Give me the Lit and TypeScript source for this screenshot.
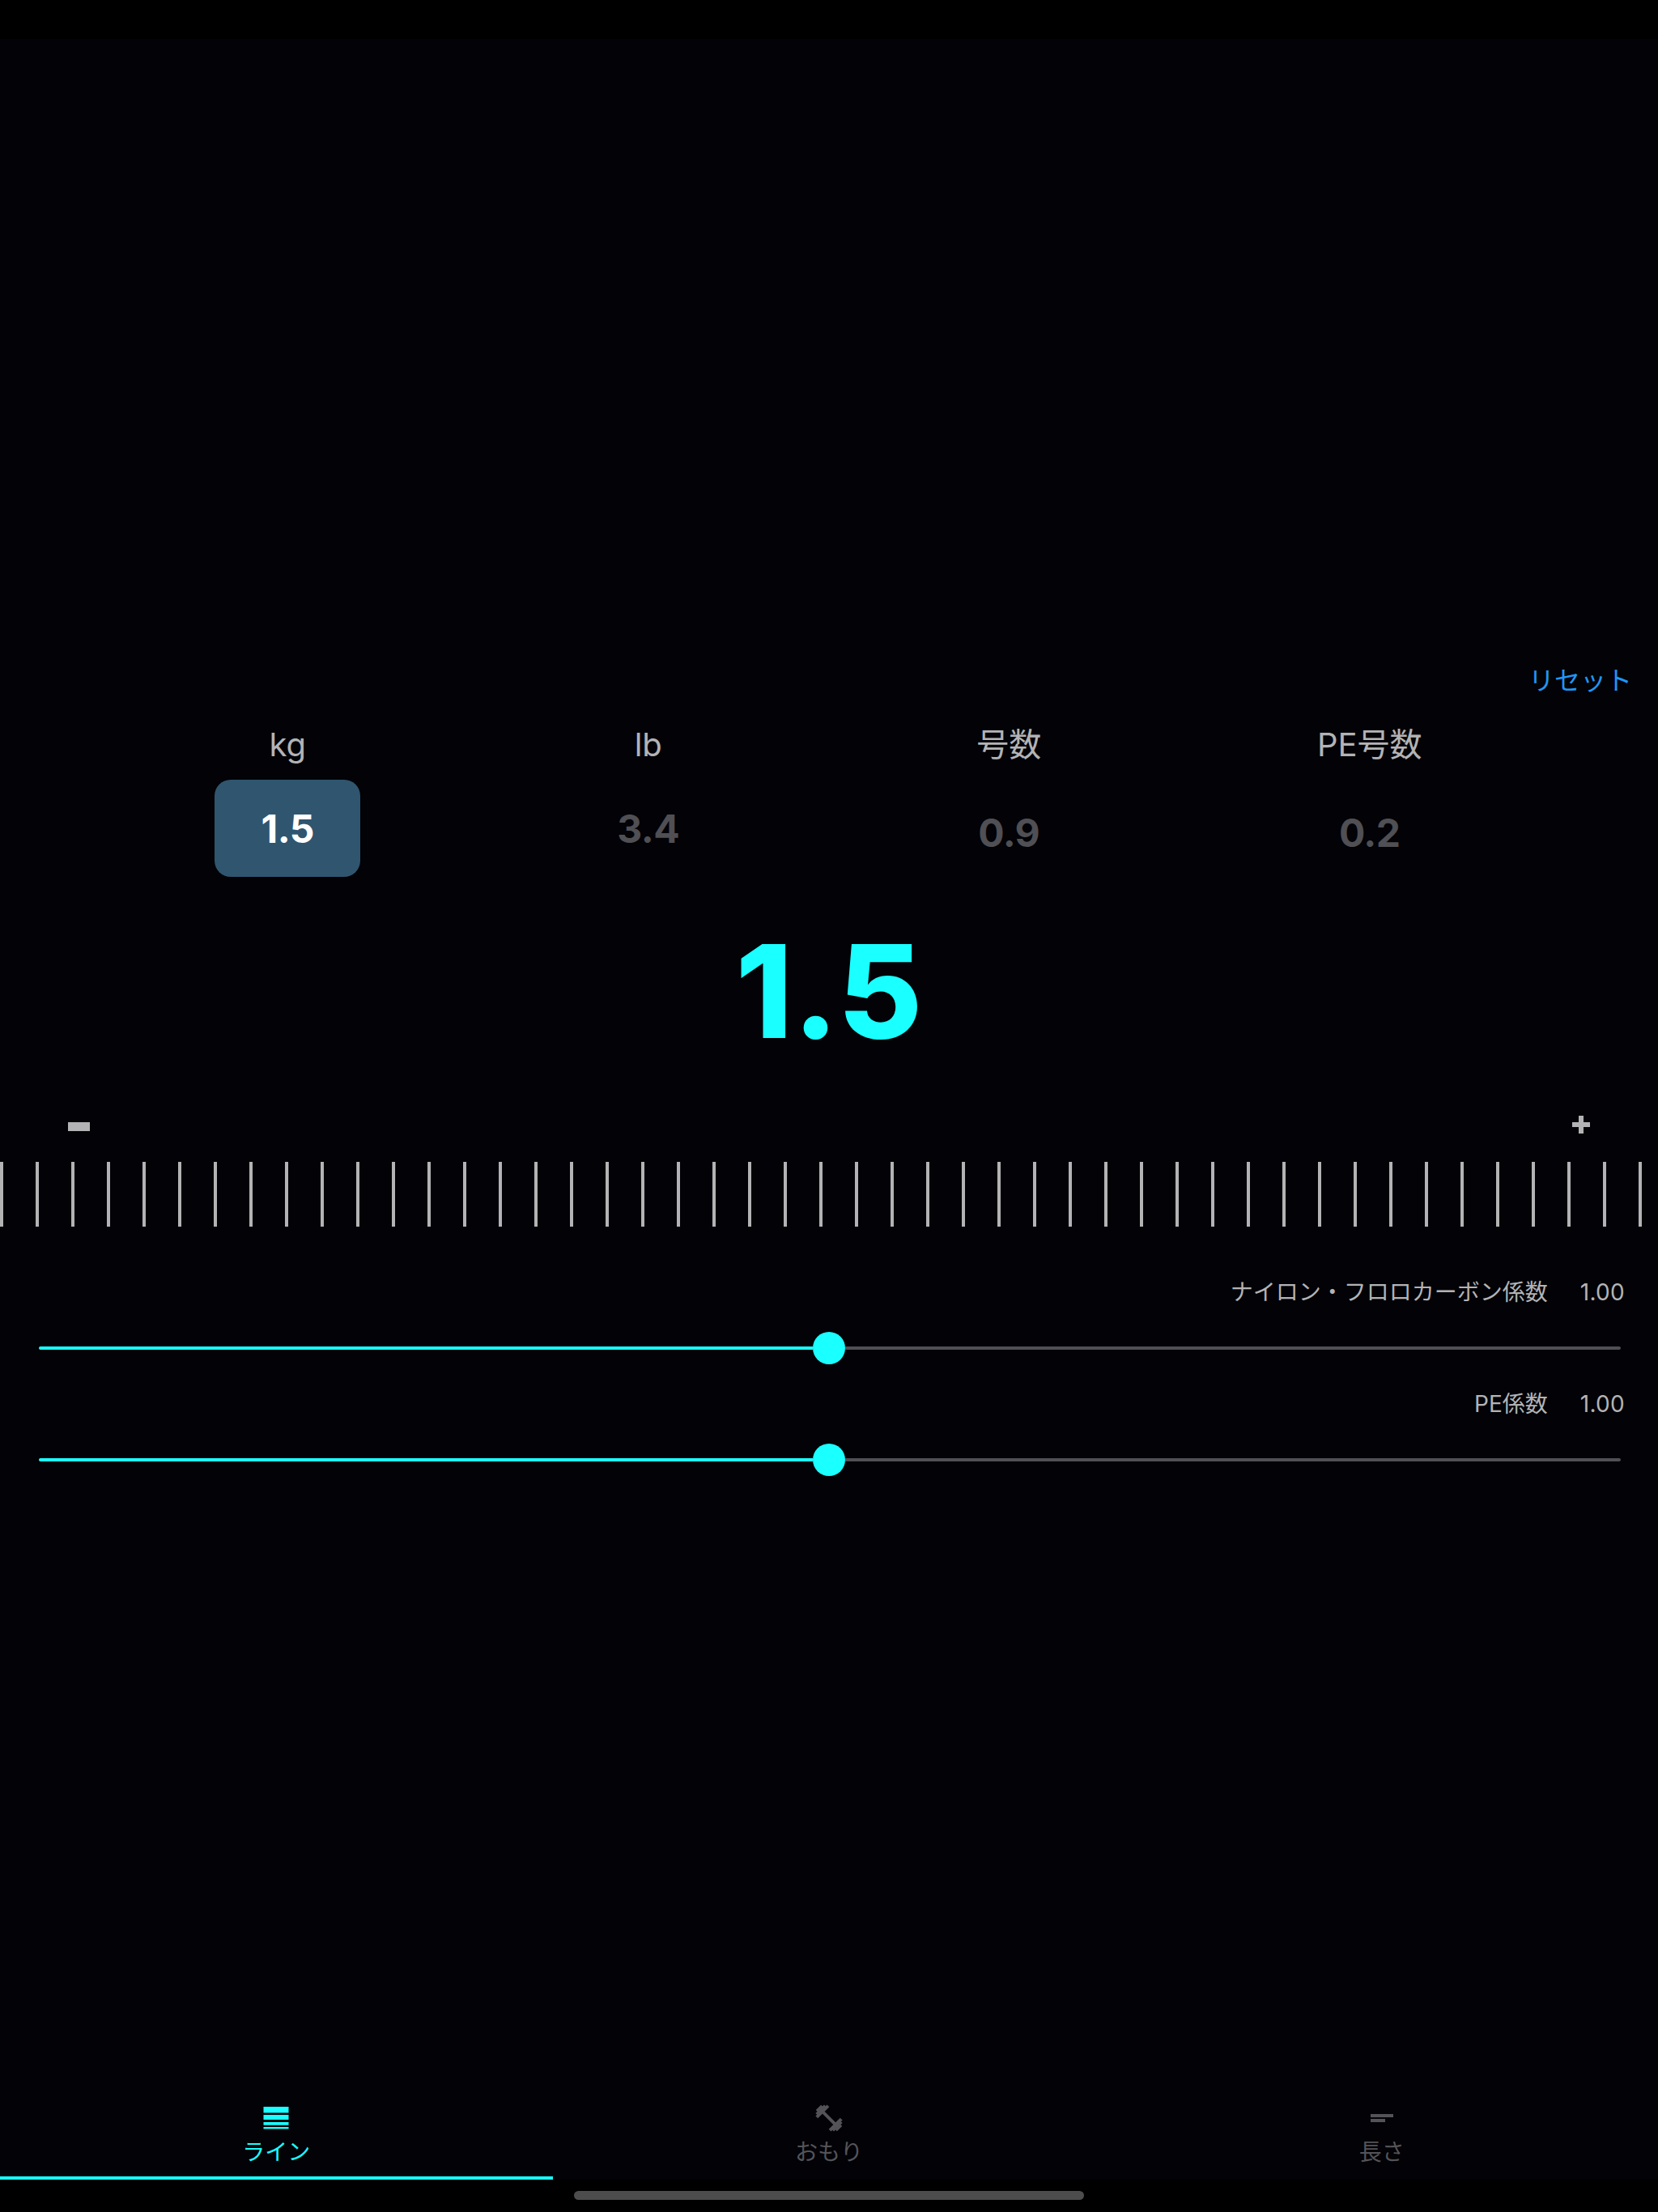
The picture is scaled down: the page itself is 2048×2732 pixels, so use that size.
import { LitElement, html, css } from "lit";
import { customElement } from "lit/decorators.js";

const UNITS = [
  { label: "kg", value: "1.5", active: true, low: false },
  { label: "lb", value: "3.4", active: false, low: false },
  { label: "号数", value: "0.9", active: false, low: true },
  { label: "PE号数", value: "0.2", active: false, low: true },
];

const SLIDERS = [
  { label: "ナイロン・フロロカーボン係数", value: "1.00" },
  { label: "PE係数", value: "1.00" },
];

@customElement("app-root")
export class AppRoot extends LitElement {
  static styles = css`
    :host {
      display: flex;
      flex-direction: column;
      width: 2048px;
      height: 2732px;
      background: #020207;
      color: #b3b3b5;
      font-family: Inter, "Noto Sans CJK JP", sans-serif;
      overflow: hidden;
    }
    .status {
      flex: none;
      height: 48px;
      background: #000;
    }
    .main {
      flex: 1;
      padding-top: 772px;
    }
    .reset-row {
      display: flex;
      justify-content: flex-end;
      padding: 1px 32px 0 0;
      height: 39px;
      line-height: 40px;
      font-size: 32px;
      font-weight: 400;
      color: #2196f3;
    }
    .units {
      display: grid;
      grid-template-columns: repeat(4, 1fr);
      padding: 36px 133.500px 0 132.500px;
    }
    .unit {
      display: flex;
      flex-direction: column;
      align-items: center;
    }
    .unit-label {
      height: 48px;
      line-height: 48px;
      font-size: 40px;
      font-weight: 400;
    }
    .unit-value {
      display: flex;
      align-items: center;
      justify-content: center;
      box-sizing: border-box;
      width: 180px;
      height: 120px;
      margin-top: 19px;
      border-radius: 20px;
      font-size: 48px;
      font-weight: 700;
      letter-spacing: -0.5px;
      color: #4f4f54;
    }
    .unit-value.low {
      padding-top: 10px;
    }
    .unit-value.active {
      background: #30556f;
      color: #fff;
    }
    .big {
      margin-top: 51px;
      height: 181px;
      line-height: 180px;
      text-align: center;
      font-size: 160px;
      font-weight: 800;
      color: #1affff;
    }
    .steps {
      display: flex;
      align-items: center;
      justify-content: space-between;
      height: 24px;
      margin-top: 64px;
      padding: 0 84px;
    }
    .minus {
      width: 27px;
      height: 11px;
      background: #b3b3b5;
    }
    .plus {
      width: 22px;
      height: 22px;
      margin-bottom: 5px;
      fill: #b3b3b5;
    }
    .ticks {
      display: flex;
      gap: 40px;
      margin-top: 32px;
      height: 80px;
    }
    .tick {
      flex: none;
      width: 4px;
      height: 80px;
      background: #b3b3b5;
    }
    .sliders {
      margin-top: 62px;
    }
    .slider {
      height: 138px;
    }
    .slider-head {
      display: flex;
      justify-content: flex-end;
      gap: 40px;
      margin-top: -1px;
      padding-right: 41px;
      height: 40px;
      line-height: 40px;
      font-size: 28px;
      font-weight: 400;
    }
    .slider-head .num {
      letter-spacing: 0.3px;
    }
    .slider + .slider .slider-head {
      margin-top: 0;
    }
    .track {
      display: flex;
      align-items: center;
      height: 40px;
      margin: 29px 46px 0 48px;
    }
    .fill {
      flex: none;
      width: 956px;
      height: 4px;
      border-radius: 2px 0 0 2px;
      background: #1affff;
    }
    .rest {
      flex: 1;
      height: 4px;
      border-radius: 0 2px 2px 0;
      background: #4f4f55;
    }
    .thumb {
      flex: none;
      width: 40px;
      height: 40px;
      border-radius: 50%;
      background: #1affff;
    }
    .tabs {
      display: grid;
      grid-template-columns: repeat(3, 1fr);
      height: 112px;
    }
    .tab {
      display: flex;
      flex-direction: column;
      align-items: center;
      box-sizing: border-box;
      padding-top: 16px;
      border-bottom: 4px solid transparent;
      color: #545458;
    }
    .tab.active {
      border-bottom-color: #1affff;
      color: #1affff;
    }
    .tab-icon {
      display: block;
      width: 40px;
      height: 40px;
      fill: currentColor;
    }
    .tab-label {
      height: 40px;
      line-height: 40px;
      margin-top: 2px;
      font-size: 28px;
      font-weight: 400;
    }
    .home {
      display: flex;
      justify-content: center;
      height: 40px;
      padding-top: 14px;
      box-sizing: border-box;
      background: #000;
    }
    .home-bar {
      width: 630px;
      height: 11px;
      border-radius: 6px;
      background: #4d4d4d;
    }
  `;

  render() {
    return html`
      <div class="status"></div>
      <div class="main">
        <div class="reset-row"><span>リセット</span></div>
        <div class="units">
          ${UNITS.map(
            (u) => html`
              <div class="unit">
                <div class="unit-label">${u.label}</div>
                <div class="unit-value ${u.active ? "active" : ""} ${u.low ? "low" : ""}">${u.value}</div>
              </div>
            `
          )}
        </div>
        <div class="big">1.5</div>
        <div class="steps">
          <div class="minus"></div>
          <svg class="plus" viewBox="0 0 22 22"><path d="M8 0h6v8h8v6h-8v8H8v-8H0V8h8z" /></svg>
        </div>
        <div class="ticks">
          ${Array.from({ length: 47 }, () => html`<div class="tick"></div>`)}
        </div>
        <div class="sliders">
          ${SLIDERS.map(
            (s) => html`
              <div class="slider">
                <div class="slider-head"><span>${s.label}</span><span class="num">${s.value}</span></div>
                <div class="track"><div class="fill"></div><div class="thumb"></div><div class="rest"></div></div>
              </div>
            `
          )}
        </div>
      </div>
      <div class="tabs">
        <div class="tab active">
          <svg class="tab-icon" viewBox="0 0 40 40">
            <rect x="4.500" y="6" width="31" height="7.500" />
            <rect x="4.500" y="16" width="31" height="6" />
            <rect x="4.500" y="25" width="31" height="3.700" />
            <rect x="4.500" y="31" width="31" height="2.400" />
          </svg>
          <div class="tab-label">ライン</div>
        </div>
        <div class="tab">
          <svg class="tab-icon" viewBox="0 0 40 40">
            <g transform="rotate(45 20 20)">
              <rect x="6" y="18" width="28" height="4" />
              <rect x="1.500" y="15.500" width="3" height="9" />
              <rect x="4" y="12.500" width="3" height="15" />
              <rect x="6.500" y="10" width="4" height="20" />
              <rect x="29.500" y="10" width="4" height="20" />
              <rect x="33" y="12.500" width="3" height="15" />
              <rect x="35.500" y="15.500" width="3" height="9" />
            </g>
          </svg>
          <div class="tab-label">おもり</div>
        </div>
        <div class="tab">
          <svg class="tab-icon" viewBox="0 0 40 40">
            <rect x="6" y="15" width="28" height="4" />
            <rect x="6" y="21" width="18" height="4" />
          </svg>
          <div class="tab-label">長さ</div>
        </div>
      </div>
      <div class="home"><div class="home-bar"></div></div>
    `;
  }
}
